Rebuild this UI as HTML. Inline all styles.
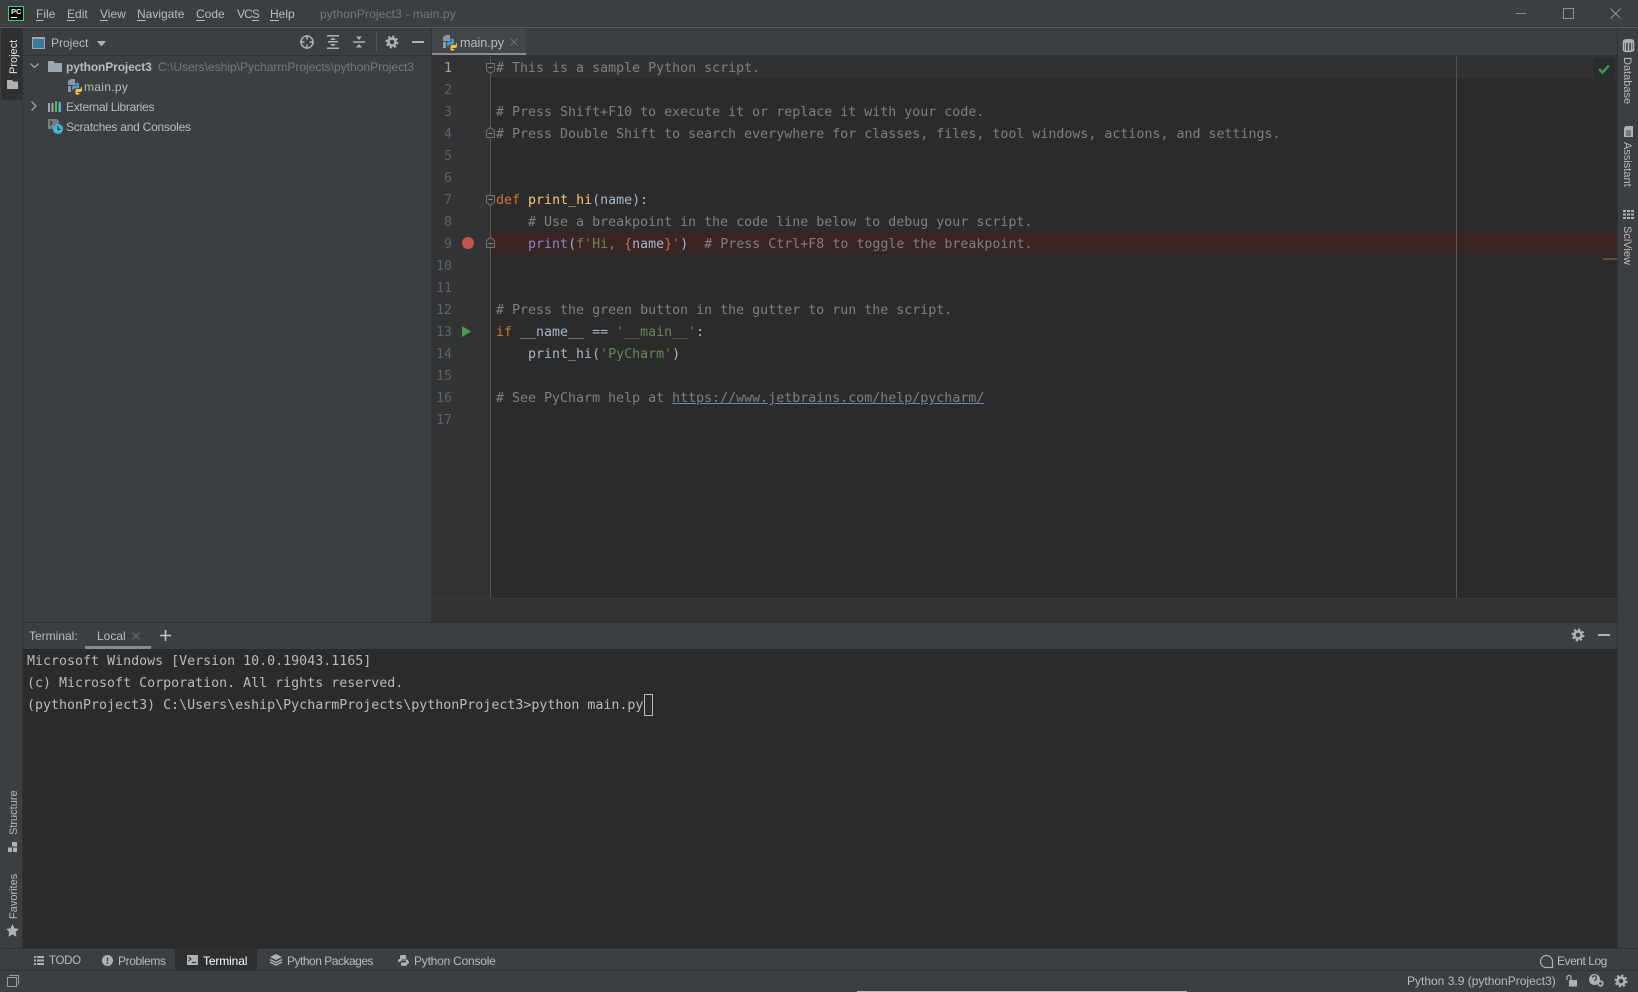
<!DOCTYPE html>
<html lang="en"><head><meta charset="utf-8"><title>pythonProject3 - main.py</title>
<style>
html,body{margin:0;padding:0;width:1638px;height:992px;overflow:hidden;background:#3c3f41}
body{position:relative;font:12px "Liberation Sans",sans-serif;color:#bbb}
.a{position:absolute}
.t{position:absolute;white-space:pre;line-height:16px;height:16px}
.m{position:absolute;white-space:pre;font:13.3px/22px "DejaVu Sans Mono","Liberation Mono",monospace;height:22px;color:#a9b7c6;margin-top:2px}
.c{color:#808080}.k{color:#cc7832}.f{color:#ffc66d}.b{color:#8888c6}.s{color:#6a8759}.n{color:#606366;width:16px;text-align:right;left:436px}
.v{position:absolute;white-space:pre;line-height:14px;height:14px;transform-origin:0 0;font-size:11px}
svg{position:absolute;overflow:visible}
u{text-decoration-thickness:1px;text-underline-offset:2px}
</style></head><body>
<svg width="0" height="0" style="position:absolute"><defs>
<symbol id="gear" viewBox="-7 -7 14 14" overflow="visible"><circle r="3.6" fill="none" stroke="#afb1b3" stroke-width="2.6"/><circle r="5.6" fill="none" stroke="#afb1b3" stroke-width="1.8" stroke-dasharray="2.2 2.2"/></symbol>
<symbol id="py" viewBox="0 0 14 16" overflow="visible"><path d="M0 6V2L3 0h4v6z M0 7h3v6H0z" fill="#9aa7b0" opacity=".85"/><path d="M4 8.500c0-1.300.7-2 2-2h3V5.500H7V4.500c0-.8 3-1.300 4 0V8c0 .8-.6 1.500-1.500 1.500H7C5.800 9.500 5.500 10 5.500 11.500H4.500C4.200 11 4 10 4 8.500z" fill="#4a9ad4"/><path d="M14 11c0 1.300-.7 2-2 2H9.500v1H11.500v.8c0 1.200-4 1.200-4 0V11.500c0-.8.6-1.500 1.500-1.500h2.500c1.200 0 1.500-.5 1.500-2h.8c.2.6.2 1.800.2 3z" fill="#f4c430"/></symbol>
</defs></svg>

<!-- title bar -->
<div class="a" style="left:0;top:27px;width:1638px;height:1px;background:#5a5d5f"></div>
<div class="a" style="left:8px;top:6px;width:16px;height:15px;background:#000;outline:1px solid #21d789;outline-offset:-1px"></div>
<div class="a" style="left:11px;top:7px;color:#fff;font:bold 7.5px/9px 'Liberation Sans',sans-serif">PC</div>
<div class="a" style="left:11px;top:17px;width:6px;height:1px;background:#fff"></div>
<div class="t" style="left:36px;top:6px"><u>F</u>ile</div>
<div class="t" style="left:67px;top:6px"><u>E</u>dit</div>
<div class="t" style="left:100px;top:6px"><u>V</u>iew</div>
<div class="t" style="left:137px;top:6px"><u>N</u>avigate</div>
<div class="t" style="left:196px;top:6px"><u>C</u>ode</div>
<div class="t" style="left:237px;top:6px;letter-spacing:-.9px">VC<u>S</u></div>
<div class="t" style="left:270px;top:6px"><u>H</u>elp</div>
<div class="t" style="left:320px;top:6px;color:#787878;letter-spacing:.13px">pythonProject3 - main.py</div>
<div class="a" style="left:1516px;top:13px;width:10px;height:1px;background:#909090"></div>
<div class="a" style="left:1563px;top:8px;width:9px;height:9px;border:1px solid #909090"></div>
<svg style="left:1610px;top:8px" width="11" height="11"><path d="M.5.5l10 10M10.500.5l-10 10" stroke="#909090" fill="none"/></svg>

<!-- left strip -->
<div class="a" style="left:1px;top:28px;width:21px;height:72px;background:#2e3032"></div>
<div class="a" style="left:22px;top:28px;width:1px;height:920px;background:#323232"></div>
<div class="v" style="left:7px;top:74px;transform:rotate(-90deg);color:#e6e6e6">Project</div>
<svg style="left:7px;top:80px" width="12" height="9"><path d="M0 0h5l1.500 1.500H11V9H0z" fill="#afb1b3"/></svg>
<div class="v" style="left:7px;top:835px;transform:rotate(-90deg)">Structure</div>
<svg style="left:8px;top:842px" width="10" height="10"><path d="M4 0h5v4.500H4zM0 5.500h4V10H0zM5 5.500h4V10H5z" fill="#afb1b3"/></svg>
<div class="v" style="left:7px;top:919px;transform:rotate(-90deg)">Favorites</div>
<svg style="left:6px;top:924px" width="13" height="13"><path d="M6.500 0l2 4.400 4.500.5-3.300 3.100.9 4.800-4.100-2.400-4.100 2.400.9-4.800L0 4.900l4.500-.5z" fill="#afb1b3"/></svg>

<!-- project panel -->
<div class="a" style="left:23px;top:55px;width:408px;height:1px;background:#323232"></div>
<svg style="left:32px;top:37px" width="13" height="12"><rect x=".5" y=".5" width="12" height="11" fill="#3d7a9a" stroke="#9aa7b0"/><rect x="0" y="0" width="13" height="2" fill="#9aa7b0"/></svg>
<div class="t" style="left:51px;top:35px">Project</div>
<svg style="left:97px;top:41px" width="9" height="6"><path d="M0 0h9L4.500 5.500z" fill="#afb1b3"/></svg>
<svg style="left:300px;top:35px" width="14" height="14" fill="none" stroke="#afb1b3" stroke-width="1.500"><circle cx="7" cy="7" r="6"/><path d="M7 0v4.500M7 9.500V14M0 7h4.500M9.500 7H14"/></svg>
<svg style="left:327px;top:35px" width="12" height="14" fill="#afb1b3"><path d="M0 0h12v1.500H0zM0 12.500h12V14H0zM1 6h10v1.500H1zM6 2.500l3 2.500H3zM6 11.500L3 9h6z"/></svg>
<svg style="left:353px;top:35px" width="12" height="14" fill="#afb1b3"><path d="M0 6.300h12v1.400H0zM6 5L3 1.500h6zM6 9l3 3.500H3z"/></svg>
<div class="a" style="left:376px;top:32px;width:1px;height:20px;background:#515658"></div>
<svg style="left:385px;top:35px" width="14" height="14"><use href="#gear" width="14" height="14"/></svg>
<div class="a" style="left:412px;top:41px;width:12px;height:2px;background:#afb1b3"></div>
<svg style="left:30px;top:63px" width="9" height="6"><path d="M.5.5l4 4 4-4" stroke="#9da0a2" stroke-width="1.300" fill="none"/></svg>
<svg style="left:48px;top:61px" width="14" height="11"><path d="M0 0h5.500L7 2h7v9H0z" fill="#9aa7b0"/></svg>
<div class="t" style="left:66px;top:59px;font-weight:bold;letter-spacing:-.12px">pythonProject3</div>
<div class="t" style="left:158px;top:59px;color:#787878">C:\Users\eship\PycharmProjects\pythonProject3</div>
<svg style="left:68px;top:79px" width="14" height="16"><use href="#py" width="14" height="16"/></svg>
<div class="t" style="left:84px;top:79px;letter-spacing:.3px">main.py</div>
<svg style="left:31px;top:101px" width="6" height="10"><path d="M.5.5l4.500 4.500-4.500 4.500" stroke="#9da0a2" stroke-width="1.300" fill="none"/></svg>
<svg style="left:48px;top:101px" width="14" height="11"><path d="M0 2h2v9H0z" fill="#9aa7b0"/><path d="M3.500 2h2v9h-2z" fill="#9aa7b0"/><path d="M7 0h2v11H7z" fill="#62b543"/><path d="M10.500 1h2.500v10h-2.500z" fill="#40b6e0"/></svg>
<div class="t" style="left:66px;top:99px;letter-spacing:-.29px">External Libraries</div>
<svg style="left:48px;top:119px" width="15" height="15"><path d="M0 0h9l2 2v4H6v4H0z" fill="#787d80"/><path d="M2 2l2 2-2 2" stroke="#2b2b2b" fill="none"/><circle cx="10" cy="10" r="5" fill="#40b6e0"/><path d="M10 7v3.500h2.500" stroke="#2b2b2b" stroke-width="1.200" fill="none"/></svg>
<div class="t" style="left:66px;top:119px;letter-spacing:-.24px">Scratches and Consoles</div>

<div class="a" style="left:431px;top:28px;width:1px;height:594px;background:#323232"></div>

<!-- editor tabs -->
<div class="a" style="left:432px;top:29px;width:94px;height:26px;background:#424649"></div>
<div class="a" style="left:432px;top:53px;width:94px;height:2px;background:#8a8d90"></div>
<div class="a" style="left:432px;top:55px;width:1185px;height:1px;background:#323232"></div>
<svg style="left:443px;top:35px" width="14" height="16"><use href="#py" width="14" height="16"/></svg>
<div class="t" style="left:460px;top:35px;font-size:12.6px">main.py</div>
<svg style="left:510px;top:38px" width="8" height="8"><path d="M.5.5l7 7M7.500.5l-7 7" stroke="#6f7274" fill="none"/></svg>

<!-- editor -->
<div class="a" style="left:432px;top:56px;width:58px;height:542px;background:#313335"></div>
<div class="a" style="left:491px;top:56px;width:1126px;height:542px;background:#2b2b2b"></div>
<div class="a" style="left:490px;top:56px;width:1px;height:542px;background:#555"></div>
<div class="a" style="left:432px;top:598px;width:1185px;height:24px;background:#313335;border-top:1px solid #3b3b3b;box-sizing:border-box"></div>
<div class="a" style="left:491px;top:56px;width:1126px;height:22px;background:#323232"></div>
<div class="a" style="left:491px;top:232px;width:1126px;height:22px;background:#3a2323"></div>
<div class="a" style="left:1456px;top:56px;width:1px;height:542px;background:#555"></div>
<div class="a" style="left:1593px;top:58px;width:22px;height:20px;background:#2b2b2b;border-radius:3px"></div>
<svg style="left:1598px;top:64px" width="12" height="10"><path d="M1 5l3.500 3.500L11 1.500" stroke="#3c9a4a" stroke-width="2.400" fill="none"/></svg>
<div class="a" style="left:1603px;top:258px;width:14px;height:2px;background:#6b4a3a"></div>

<div class="m n" style="top:56px;color:#a4a3a3">1</div>
<div class="m n" style="top:78px">2</div>
<div class="m n" style="top:100px">3</div>
<div class="m n" style="top:122px">4</div>
<div class="m n" style="top:144px">5</div>
<div class="m n" style="top:166px">6</div>
<div class="m n" style="top:188px">7</div>
<div class="m n" style="top:210px">8</div>
<div class="m n" style="top:232px">9</div>
<div class="m n" style="top:254px">10</div>
<div class="m n" style="top:276px">11</div>
<div class="m n" style="top:298px">12</div>
<div class="m n" style="top:320px">13</div>
<div class="m n" style="top:342px">14</div>
<div class="m n" style="top:364px">15</div>
<div class="m n" style="top:386px">16</div>
<div class="m n" style="top:408px">17</div>

<div class="m c" style="left:496px;top:56px"># This is a sample Python script.</div>
<div class="m c" style="left:496px;top:100px"># Press Shift+F10 to execute it or replace it with your code.</div>
<div class="m c" style="left:496px;top:122px"># Press Double Shift to search everywhere for classes, files, tool windows, actions, and settings.</div>
<div class="m" style="left:496px;top:188px"><span class="k">def</span> <span class="f">print_hi</span>(name):</div>
<div class="m c" style="left:496px;top:210px">    # Use a breakpoint in the code line below to debug your script.</div>
<div class="m" style="left:496px;top:232px">    <span class="b">print</span>(<span class="s">f'Hi, </span><span class="k">{</span>name<span class="k">}</span><span class="s">'</span>)  <span class="c"># Press Ctrl+F8 to toggle the breakpoint.</span></div>
<div class="m c" style="left:496px;top:298px"># Press the green button in the gutter to run the script.</div>
<div class="m" style="left:496px;top:320px"><span class="k">if</span> __name__ == <span class="s">'__main__'</span>:</div>
<div class="m" style="left:496px;top:342px">    print_hi(<span class="s">'PyCharm'</span>)</div>
<div class="m c" style="left:496px;top:386px"># See PyCharm help at <span style="text-decoration:underline;color:#808080;text-decoration-color:#6f8aa8">https://www.jetbrains.com/help/pycharm/</span></div>

<svg style="left:486px;top:63px" width="9" height="11"><path d="M.5.5h8v7l-4 3-4-3z" fill="#313335" stroke="#6f7274"/><path d="M2.500 4.500h4" stroke="#8a8d90"/></svg>
<svg style="left:486px;top:127px" width="9" height="11"><path d="M.5 10.500h8v-7l-4-3-4 3z" fill="#313335" stroke="#6f7274"/><path d="M2.500 6.500h4" stroke="#8a8d90"/></svg>
<svg style="left:486px;top:195px" width="9" height="11"><path d="M.5.5h8v7l-4 3-4-3z" fill="#313335" stroke="#6f7274"/><path d="M2.500 4.500h4" stroke="#8a8d90"/></svg>
<svg style="left:486px;top:237px" width="9" height="11"><path d="M.5 10.500h8v-7l-4-3-4 3z" fill="#313335" stroke="#6f7274"/><path d="M2.500 6.500h4" stroke="#8a8d90"/></svg>
<svg style="left:462px;top:237px" width="12" height="12"><circle cx="6" cy="6" r="6" fill="#c75450"/></svg>
<svg style="left:462px;top:326px" width="9" height="11"><path d="M0 0l9 5.500L0 11z" fill="#499c54"/></svg>

<!-- right strip -->
<div class="a" style="left:1617px;top:28px;width:1px;height:920px;background:#323232"></div>
<div class="v" style="left:1634px;top:57px;transform:rotate(90deg)">Database</div>
<svg style="left:1623px;top:39px" width="11" height="13" fill="none" stroke="#afb1b3"><ellipse cx="5.5" cy="2" rx="5" ry="1.500" fill="#afb1b3"/><path d="M.5 2v9c0 2 10 2 10 0V2M2.500 3v9M5.500 3.500v9M8.500 3v9" stroke-width="1.500"/></svg>
<div class="v" style="left:1634px;top:142px;transform:rotate(90deg)">Assistant</div>
<svg style="left:1624px;top:126px" width="9" height="11"><path d="M0 2l2-2h7v11H0z" fill="#afb1b3"/><path d="M2 5h5M2 7h5M2 9h5" stroke="#3c3f41"/></svg>
<div class="v" style="left:1634px;top:226px;transform:rotate(90deg)">SciView</div>
<svg style="left:1623px;top:210px" width="11" height="9" fill="#afb1b3"><path d="M0 0h3v2H0zM4 0h3v2H4zM8 0h3v2H8zM0 3.500h3v2H0zM4 3.500h3v2H4zM8 3.500h3v2H8zM0 7h3v2H0zM4 7h3v2H4zM8 7h3v2H8z"/></svg>

<!-- terminal -->
<div class="a" style="left:23px;top:622px;width:1594px;height:1px;background:#323232"></div>
<div class="t" style="left:29px;top:628px">Terminal:</div>
<div class="t" style="left:97px;top:628px">Local</div>
<svg style="left:132px;top:632px" width="8" height="8"><path d="M.5.5l7 7M7.500.5l-7 7" stroke="#6f7274" fill="none"/></svg>
<svg style="left:160px;top:630px" width="11" height="11"><path d="M5.500 0v11M0 5.500h11" stroke="#c4c6c8" stroke-width="1.600"/></svg>
<div class="a" style="left:85px;top:646px;width:66px;height:3px;background:#8a8d90"></div>
<svg style="left:1571px;top:628px" width="14" height="14"><use href="#gear" width="14" height="14"/></svg>
<div class="a" style="left:1598px;top:634px;width:12px;height:2px;background:#afb1b3"></div>
<div class="a" style="left:23px;top:649px;width:1594px;height:299px;background:#2b2b2b"></div>
<div class="m" style="left:27px;top:649px;color:#bbb">Microsoft Windows [Version 10.0.19043.1165]</div>
<div class="m" style="left:27px;top:671px;color:#bbb">(c) Microsoft Corporation. All rights reserved.</div>
<div class="m" style="left:27px;top:693px;color:#bbb">(pythonProject3) C:\Users\eship\PycharmProjects\pythonProject3&gt;python main.py</div>
<div class="a" style="left:644px;top:694px;width:7px;height:20px;border:1px solid #bbb"></div>

<!-- tool window bar -->
<div class="a" style="left:1px;top:948px;width:1637px;height:1px;background:#323232"></div>
<div class="a" style="left:0;top:970px;width:1638px;height:1px;background:#323232"></div>
<div class="a" style="left:175px;top:949px;width:82px;height:21px;background:#2d2f30"></div>
<svg style="left:34px;top:956px" width="10" height="9" fill="#afb1b3"><path d="M0 0h2v2H0zM3 0h7v2H3zM0 3.500h2v2H0zM3 3.500h7v2H3zM0 7h2v2H0zM3 7h7v2H3z"/></svg>
<div class="t" style="left:49px;top:953px;font-size:11.5px;letter-spacing:-.3px">TODO</div>
<svg style="left:102px;top:955px" width="11" height="11"><circle cx="5.5" cy="5.5" r="5.5" fill="#afb1b3"/><path d="M5.500 2.500v4M5.500 7.500v1.500" stroke="#3c3f41" stroke-width="1.500"/></svg>
<div class="t" style="left:118px;top:953px;letter-spacing:-.39px">Problems</div>
<svg style="left:187px;top:955px" width="11" height="10"><rect width="11" height="10" fill="#afb1b3"/><path d="M1.500 2l2.500 2-2.500 2M5 7.500h4" stroke="#2d2f30" fill="none"/></svg>
<div class="t" style="left:203px;top:953px;color:#fff;letter-spacing:-.13px">Terminal</div>
<svg style="left:270px;top:954px" width="12" height="13" fill="#afb1b3"><path d="M6 0l6 3-6 3-6-3z"/><path d="M0 5.500l6 3 6-3M0 8l6 3 6-3" fill="none" stroke="#afb1b3" stroke-width="1.300"/></svg>
<div class="t" style="left:287px;top:953px;letter-spacing:-.49px">Python Packages</div>
<svg style="left:398px;top:955px" width="11" height="11" fill="#afb1b3"><path d="M3 0h4c.8 0 1.200.5 1.200 1.200V4H3.500v.5h5.300c.8 0 1.200.5 1.200 1.200v.3C10 7 9 7 8 7V5.500H4c-1 0-1.500.5-1.500 1.500H1C0 7 0 6 0 5.500 0 4.500.5 4 1.500 4H2V1.500C2 .5 2.500 0 3 0z"/><path d="M3 7.500h5V6h2c1 0 1 1 1 1.500 0 1-.5 1.500-1.500 1.500H9v1c0 .6-.8 1-3 1s-3-.4-3-1z"/></svg>
<div class="t" style="left:414px;top:953px;letter-spacing:-.22px">Python Console</div>
<svg style="left:1540px;top:955px" width="13" height="13" fill="none"><path d="M12.500 12.500H6.500A6 6 0 1 1 12.500 6.500z" stroke="#afb1b3" stroke-width="1.200"/></svg>
<div class="t" style="left:1557px;top:953px;letter-spacing:-.46px">Event Log</div>

<!-- status bar -->
<svg style="left:7px;top:975px" width="12" height="12" fill="none" stroke="#9da0a2"><path d="M2.500.5h9v9M.5 2.500h9v9h-9z"/></svg>
<div class="t" style="left:1407px;top:973px">Python 3.9 (pythonProject3)</div>
<svg style="left:1566px;top:975px" width="11" height="12" fill="none"><path d="M1 5V2.500C1 1 2 .5 3 .5S5 1 5 2.500V5" stroke="#afb1b3" stroke-width="1.200"/><rect x="3" y="5" width="8" height="6.500" fill="#afb1b3"/></svg>
<svg style="left:1589px;top:974px" width="16" height="14"><circle cx="5.5" cy="5.5" r="5.500" fill="#afb1b3"/><path d="M3.500 3.800a2 2 0 1 1 2.500 2l-.4 1.200" stroke="#3c3f41" stroke-width="1.200" fill="none"/><circle cx="11.500" cy="9.500" r="2.300" fill="none" stroke="#afb1b3" stroke-width="1.800"/></svg>
<svg style="left:1614px;top:974px" width="14" height="14"><use href="#gear" width="14" height="14"/></svg>
<div class="a" style="left:857px;top:991px;width:330px;height:1px;background:#b8b8b8"></div>
</body></html>
